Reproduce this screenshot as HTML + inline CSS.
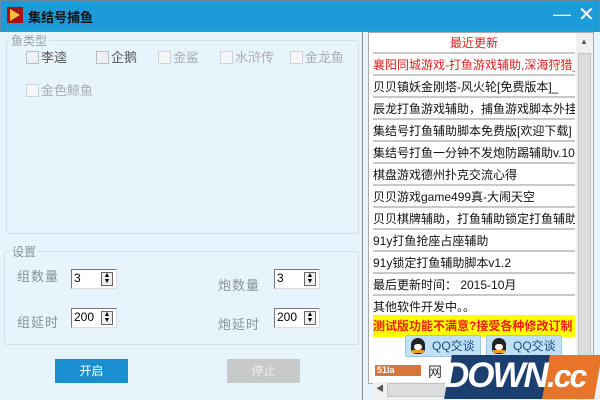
<!DOCTYPE html><html><head><meta charset="utf-8"><style>
*{margin:0;padding:0;box-sizing:border-box}
body{width:600px;height:400px;overflow:hidden;font-family:"Liberation Sans","Noto Sans CJK SC",sans-serif;background:#e7f4fb;position:relative;font-size:12px}
.a{position:absolute}
.title{left:0;top:0;width:600px;height:32px;background:#1b9bd8;border:1px solid #6a8aa0}
.cb{width:13px;height:13px;border:1px solid #b8bec4;background:#eef1f3;display:inline-block;vertical-align:-2px;margin-right:2px}
.grp{border:1px solid #cfe0ea;border-radius:3px}
.lbl{color:#8a9299;font-size:12px}
.gl{color:#a8adb2;font-size:12px}
.spin{width:46px;height:20px;background:#fff;border:1px solid #777;border-right-color:#ddd;border-bottom-color:#ddd;font-size:12px;padding-left:2px;line-height:16px}
.spin i{position:absolute;right:3px;top:2px;width:12px;height:14px;border:1px solid #666;background:#eee;font-style:normal;font-size:7px;line-height:6px;text-align:center}
.list{left:373px;top:33px;width:202px;height:347px;background:#fff;overflow:hidden}
.row{position:absolute;left:0;width:202px;height:21px;border-bottom:2px solid #c9c9c9;font-size:12px;line-height:20px;white-space:nowrap;overflow:hidden;color:#111}
.qq{white-space:nowrap}
</style></head><body>
<div class="a title"></div>
<div class="a" style="left:7px;top:7px;width:16px;height:16px;background:#a3150f"><div style="position:absolute;left:3px;top:2px;width:0;height:0;border-left:10px solid #f4c230;border-top:6px solid transparent;border-bottom:6px solid transparent"></div></div>
<div class="a" style="left:28px;top:7px;font-size:13px;font-weight:bold;color:#111">集结号捕鱼</div>
<div class="a" style="left:553px;top:4px;color:#fff;font-size:18px">—</div>
<div class="a" style="left:578px;top:2px;color:#fff;font-size:20px">✕</div>

<div class="a grp" style="left:6px;top:40px;width:353px;height:194px"></div>
<div class="a gl" style="left:9px;top:32px;background:#e7f4fb;padding:0 2px;color:#9aa0a5">鱼类型</div>
<div class="a" style="left:26px;top:47px;color:#555;font-size:13px"><span class="cb"></span>李逵</div>
<div class="a" style="left:96px;top:47px;color:#555;font-size:13px"><span class="cb"></span>企鹅</div>
<div class="a gl" style="left:158px;top:47px;font-size:13px"><span class="cb" style="background:#f4f6f7;border-color:#cfd3d6"></span>金鲨</div>
<div class="a gl" style="left:220px;top:47px;font-size:13px"><span class="cb" style="background:#f4f6f7;border-color:#cfd3d6"></span>水浒传</div>
<div class="a gl" style="left:290px;top:47px;font-size:13px"><span class="cb" style="background:#f4f6f7;border-color:#cfd3d6"></span>金龙鱼</div>
<div class="a gl" style="left:26px;top:80px;font-size:13px"><span class="cb" style="background:#f4f6f7;border-color:#cfd3d6"></span>金色鲸鱼</div>

<div class="a grp" style="left:4px;top:251px;width:355px;height:94px"></div>
<div class="a lbl" style="left:10px;top:243px;background:#e7f4fb;padding:0 2px">设置</div>
<div class="a lbl" style="left:17px;top:266px;font-size:13px;letter-spacing:1px">组数量</div>
<div class="a lbl" style="left:17px;top:312px;font-size:13px;letter-spacing:1px">组延时</div>
<div class="a lbl" style="left:218px;top:275px;font-size:13px;letter-spacing:1px">炮数量</div>
<div class="a lbl" style="left:218px;top:314px;font-size:13px;letter-spacing:1px">炮延时</div>
<div class="a spin" style="left:71px;top:269px">3<i>▲<br>▼</i></div>
<div class="a spin" style="left:71px;top:308px">200<i>▲<br>▼</i></div>
<div class="a spin" style="left:274px;top:269px">3<i>▲<br>▼</i></div>
<div class="a spin" style="left:274px;top:308px">200<i>▲<br>▼</i></div>
<div class="a" style="left:55px;top:359px;width:73px;height:24px;background:#1a8fd0;color:#fff;text-align:center;line-height:24px">开启</div>
<div class="a" style="left:227px;top:359px;width:73px;height:24px;background:#c8c9ca;color:#eee;text-align:center;line-height:24px">停止</div>

<div class="a" style="left:362px;top:32px;width:1px;height:368px;background:#888"></div>
<div class="a" style="left:368px;top:32px;width:226px;height:352px;background:#fff;border:1px solid #aaa"></div>
<div class="a list">
<div class="row" style="top:0;text-align:center;color:#e02020">最近更新</div>
<div class="row" style="top:22px;color:#e02020">襄阳同城游戏-打鱼游戏辅助,深海狩猎_</div>
<div class="row" style="top:44px">贝贝镇妖金刚塔-风火轮[免费版本]_</div>
<div class="row" style="top:66px">辰龙打鱼游戏辅助，捕鱼游戏脚本外挂</div>
<div class="row" style="top:88px">集结号打鱼辅助脚本免费版[欢迎下载]</div>
<div class="row" style="top:110px">集结号打鱼一分钟不发炮防踢辅助v.10</div>
<div class="row" style="top:132px">棋盘游戏德州扑克交流心得</div>
<div class="row" style="top:154px">贝贝游戏game499真-大闹天空</div>
<div class="row" style="top:176px">贝贝棋牌辅助，打鱼辅助锁定打鱼辅助</div>
<div class="row" style="top:198px">91y打鱼抢座占座辅助</div>
<div class="row" style="top:220px">91y锁定打鱼辅助脚本v1.2</div>
<div class="row" style="top:242px">最后更新时间： 2015-10月</div>
<div class="row" style="top:264px">其他软件开发中。。</div>
<div class="row" style="top:282px;height:22px;background:#ffff00;color:#f02010;font-weight:bold;border:none;line-height:22px">测试版功能不满意?接受各种修改订制</div>
<div class="a qq" style="left:32px;top:302px;width:76px;height:22px;background:#bfe0f5;border:1px solid #9cc8e6;border-radius:2px;color:#1a4f80;font-size:12px;line-height:20px;padding-left:26px">QQ交谈</div>
<div class="a qq" style="left:113px;top:302px;width:76px;height:22px;background:#bfe0f5;border:1px solid #9cc8e6;border-radius:2px;color:#1a4f80;font-size:12px;line-height:20px;padding-left:26px">QQ交谈</div>
<div class="a" style="left:38px;top:305px;width:14px;height:16px;border-radius:7px 7px 5px 5px;background:#222"><div style="position:absolute;left:3px;top:6px;width:8px;height:6px;background:#fff;border-radius:3px"></div><div style="position:absolute;left:1px;top:12px;width:12px;height:3px;background:#f0a020"></div></div>
<div class="a" style="left:119px;top:305px;width:14px;height:16px;border-radius:7px 7px 5px 5px;background:#222"><div style="position:absolute;left:3px;top:6px;width:8px;height:6px;background:#fff;border-radius:3px"></div><div style="position:absolute;left:1px;top:12px;width:12px;height:3px;background:#f0a020"></div></div>
<div class="a" style="left:2px;top:332px;width:46px;height:11px;background:#d8763a;color:#fff;font-size:9px;font-weight:bold;line-height:11px;padding-left:2px">51la</div>
<div class="a" style="left:55px;top:329px;font-size:14px;color:#333">网</div>
</div>
<div class="a" style="left:576px;top:33px;width:17px;height:347px;background:#f0f0f0"><div style="position:absolute;left:2px;top:20px;width:13px;height:320px;background:#dcdcdc;border:1px solid #c4c4c4"></div><div style="position:absolute;left:4px;top:4px;font-size:8px;color:#555">▲</div></div>
<div class="a" style="left:373px;top:382px;width:220px;height:17px;background:#f0f0f0"></div>
<div class="a" style="left:376px;top:383px;font-size:8px;color:#555">◀</div>
<div class="a" style="left:387px;top:383px;width:60px;height:14px;background:#dcdcdc;border:1px solid #c4c4c4"></div>

<div class="a" style="left:448px;top:355px;width:102px;height:44px;background:#1b3f6e;transform:skewX(-10deg)"></div>
<div class="a" style="left:546px;top:355px;width:52px;height:44px;background:#e8742a;transform:skewX(-10deg)"></div>
<div class="a" style="left:444px;top:354px;font-family:'Liberation Sans',sans-serif;font-weight:bold;font-style:italic;font-size:35px;color:#fff;letter-spacing:-2px;line-height:44px;white-space:nowrap">DOWN<span style="font-size:32px">.cc</span></div>
</body></html>
